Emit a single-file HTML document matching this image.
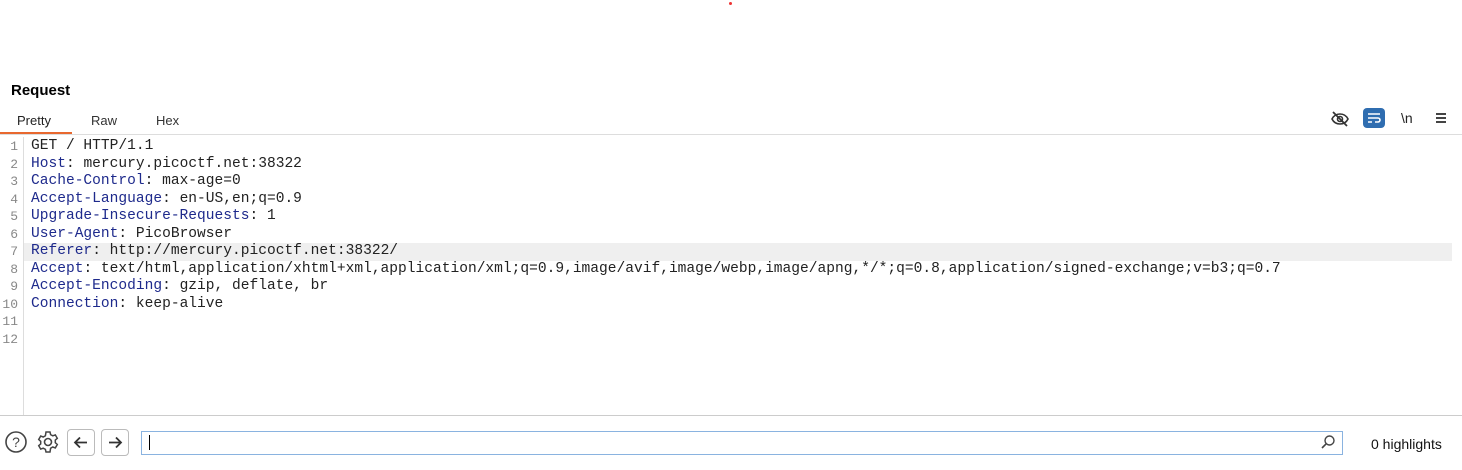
<!DOCTYPE html>
<html><head><style>
body{margin:0;width:1462px;height:470px;background:#fff;position:relative;overflow:hidden;font-family:"Liberation Sans",sans-serif;}
.abs{position:absolute}
.code{position:absolute;left:0;top:138px;width:1462px;font-family:"Liberation Mono",monospace;font-size:14.57px;}
.ln{height:17.5px;line-height:17.5px;white-space:pre;position:relative}
.n{position:absolute;left:0;top:0;width:18px;text-align:right;color:#888;font-size:13px;line-height:17.5px}
.t{position:absolute;left:31px;top:0;color:#222}
.k{color:#1e2a8c}
</style></head><body>
<div class="abs" style="left:729px;top:2px;width:3px;height:3px;background:#e33;border-radius:50%"></div>
<div class="abs" style="left:11px;top:82px;font-size:15px;font-weight:bold;color:#000">Request</div>
<div class="abs" style="left:17px;top:113px;font-size:13px;color:#222">Pretty</div>
<div class="abs" style="left:91px;top:113px;font-size:13px;color:#333">Raw</div>
<div class="abs" style="left:156px;top:113px;font-size:13px;color:#333">Hex</div>
<div class="abs" style="left:0;top:132px;width:72px;height:2px;background:#e8682f"></div>
<div class="abs" style="left:0;top:134px;width:1462px;height:1px;background:#ddd"></div>
<svg class="abs" style="left:1330px;top:110px" width="20" height="18" viewBox="0 0 20 18"><path d="M2 9c2-4 5-5 8-5s6 1 8 5c-2 4-5 5-8 5s-6-1-8-5z" fill="none" stroke="#333" stroke-width="1.6"/><circle cx="10" cy="9" r="2.5" fill="none" stroke="#333" stroke-width="1.6"/><path d="M3 2l14 14" stroke="#333" stroke-width="1.8"/></svg>
<div class="abs" style="left:1363px;top:108px;width:22px;height:20px;background:#2f6db0;border-radius:4px"></div>
<svg class="abs" style="left:1363px;top:108px" width="22" height="20"><path d="M5 6h12M5 10h10a2 2 0 0 1 0 4h-3M5 14h4" stroke="#fff" stroke-width="1.6" fill="none"/></svg>
<div class="abs" style="left:1401px;top:110px;font-size:14px;color:#222">\n</div>
<div class="abs" style="left:1436px;top:113px;width:10px;height:2px;background:#444;box-shadow:0 4px 0 #444,0 8px 0 #444"></div>
<div class="abs" style="left:23px;top:137px;width:1px;height:278px;background:#ddd"></div>
<div class="abs" style="left:24px;top:243px;width:1428px;height:18px;background:#efefef"></div>
<div class="code">
<div class="ln"><span class="n">1</span><span class="t">GET / HTTP/1.1</span></div>
<div class="ln"><span class="n">2</span><span class="t"><span class="k">Host</span>: mercury.picoctf.net:38322</span></div>
<div class="ln"><span class="n">3</span><span class="t"><span class="k">Cache-Control</span>: max-age=0</span></div>
<div class="ln"><span class="n">4</span><span class="t"><span class="k">Accept-Language</span>: en-US,en;q=0.9</span></div>
<div class="ln"><span class="n">5</span><span class="t"><span class="k">Upgrade-Insecure-Requests</span>: 1</span></div>
<div class="ln"><span class="n">6</span><span class="t"><span class="k">User-Agent</span>: PicoBrowser</span></div>
<div class="ln"><span class="n">7</span><span class="t"><span class="k">Referer</span>: http://mercury.picoctf.net:38322/</span></div>
<div class="ln"><span class="n">8</span><span class="t"><span class="k">Accept</span>: text/html,application/xhtml+xml,application/xml;q=0.9,image/avif,image/webp,image/apng,*/*;q=0.8,application/signed-exchange;v=b3;q=0.7</span></div>
<div class="ln"><span class="n">9</span><span class="t"><span class="k">Accept-Encoding</span>: gzip, deflate, br</span></div>
<div class="ln"><span class="n">10</span><span class="t"><span class="k">Connection</span>: keep-alive</span></div>
<div class="ln"><span class="n">11</span></div>
<div class="ln"><span class="n">12</span></div>
</div>
<div class="abs" style="left:0;top:415px;width:1462px;height:1px;background:#ccc"></div>
<svg class="abs" style="left:4px;top:430px" width="24" height="24"><circle cx="12" cy="12" r="10" fill="none" stroke="#444" stroke-width="1.6"/><text x="12" y="17" text-anchor="middle" font-family="Liberation Sans" font-size="14" fill="#444">?</text></svg>
<svg class="abs" style="left:36px;top:430px" width="24" height="24" viewBox="0 0 24 24"><circle cx="12" cy="12" r="3.5" fill="none" stroke="#444" stroke-width="1.6"/><path d="M10 2h4l.6 2.6 2.2 1.2 2.5-.9 2 3.4-2 1.8v2.6l2 1.8-2 3.4-2.5-.9-2.2 1.2L14 22h-4l-.6-2.6-2.2-1.2-2.5.9-2-3.4 2-1.8v-2.6l-2-1.8 2-3.4 2.5.9 2.2-1.2z" fill="none" stroke="#444" stroke-width="1.5"/></svg>
<div class="abs" style="left:67px;top:429px;width:26px;height:25px;border:1px solid #bbb;border-radius:4px"></div>
<svg class="abs" style="left:68px;top:430px" width="26" height="25"><path d="M19 12.5H7M12 7.5l-5 5 5 5" stroke="#333" stroke-width="1.8" fill="none"/></svg>
<div class="abs" style="left:101px;top:429px;width:26px;height:25px;border:1px solid #bbb;border-radius:4px"></div>
<svg class="abs" style="left:102px;top:430px" width="26" height="25"><path d="M7 12.5h12M14 7.5l5 5-5 5" stroke="#333" stroke-width="1.8" fill="none"/></svg>
<div class="abs" style="left:141px;top:431px;width:1200px;height:22px;border:1px solid #8ab3e0;"></div>
<div class="abs" style="left:149px;top:435px;width:1px;height:15px;background:#000"></div>
<svg class="abs" style="left:1320px;top:434px" width="16" height="16"><circle cx="9.5" cy="6.5" r="4.5" fill="none" stroke="#444" stroke-width="1.4"/><path d="M6.3 9.7L2 14" stroke="#444" stroke-width="1.6"/></svg>
<div class="abs" style="left:1371px;top:436px;font-size:14px;color:#111">0 highlights</div>
</body></html>
